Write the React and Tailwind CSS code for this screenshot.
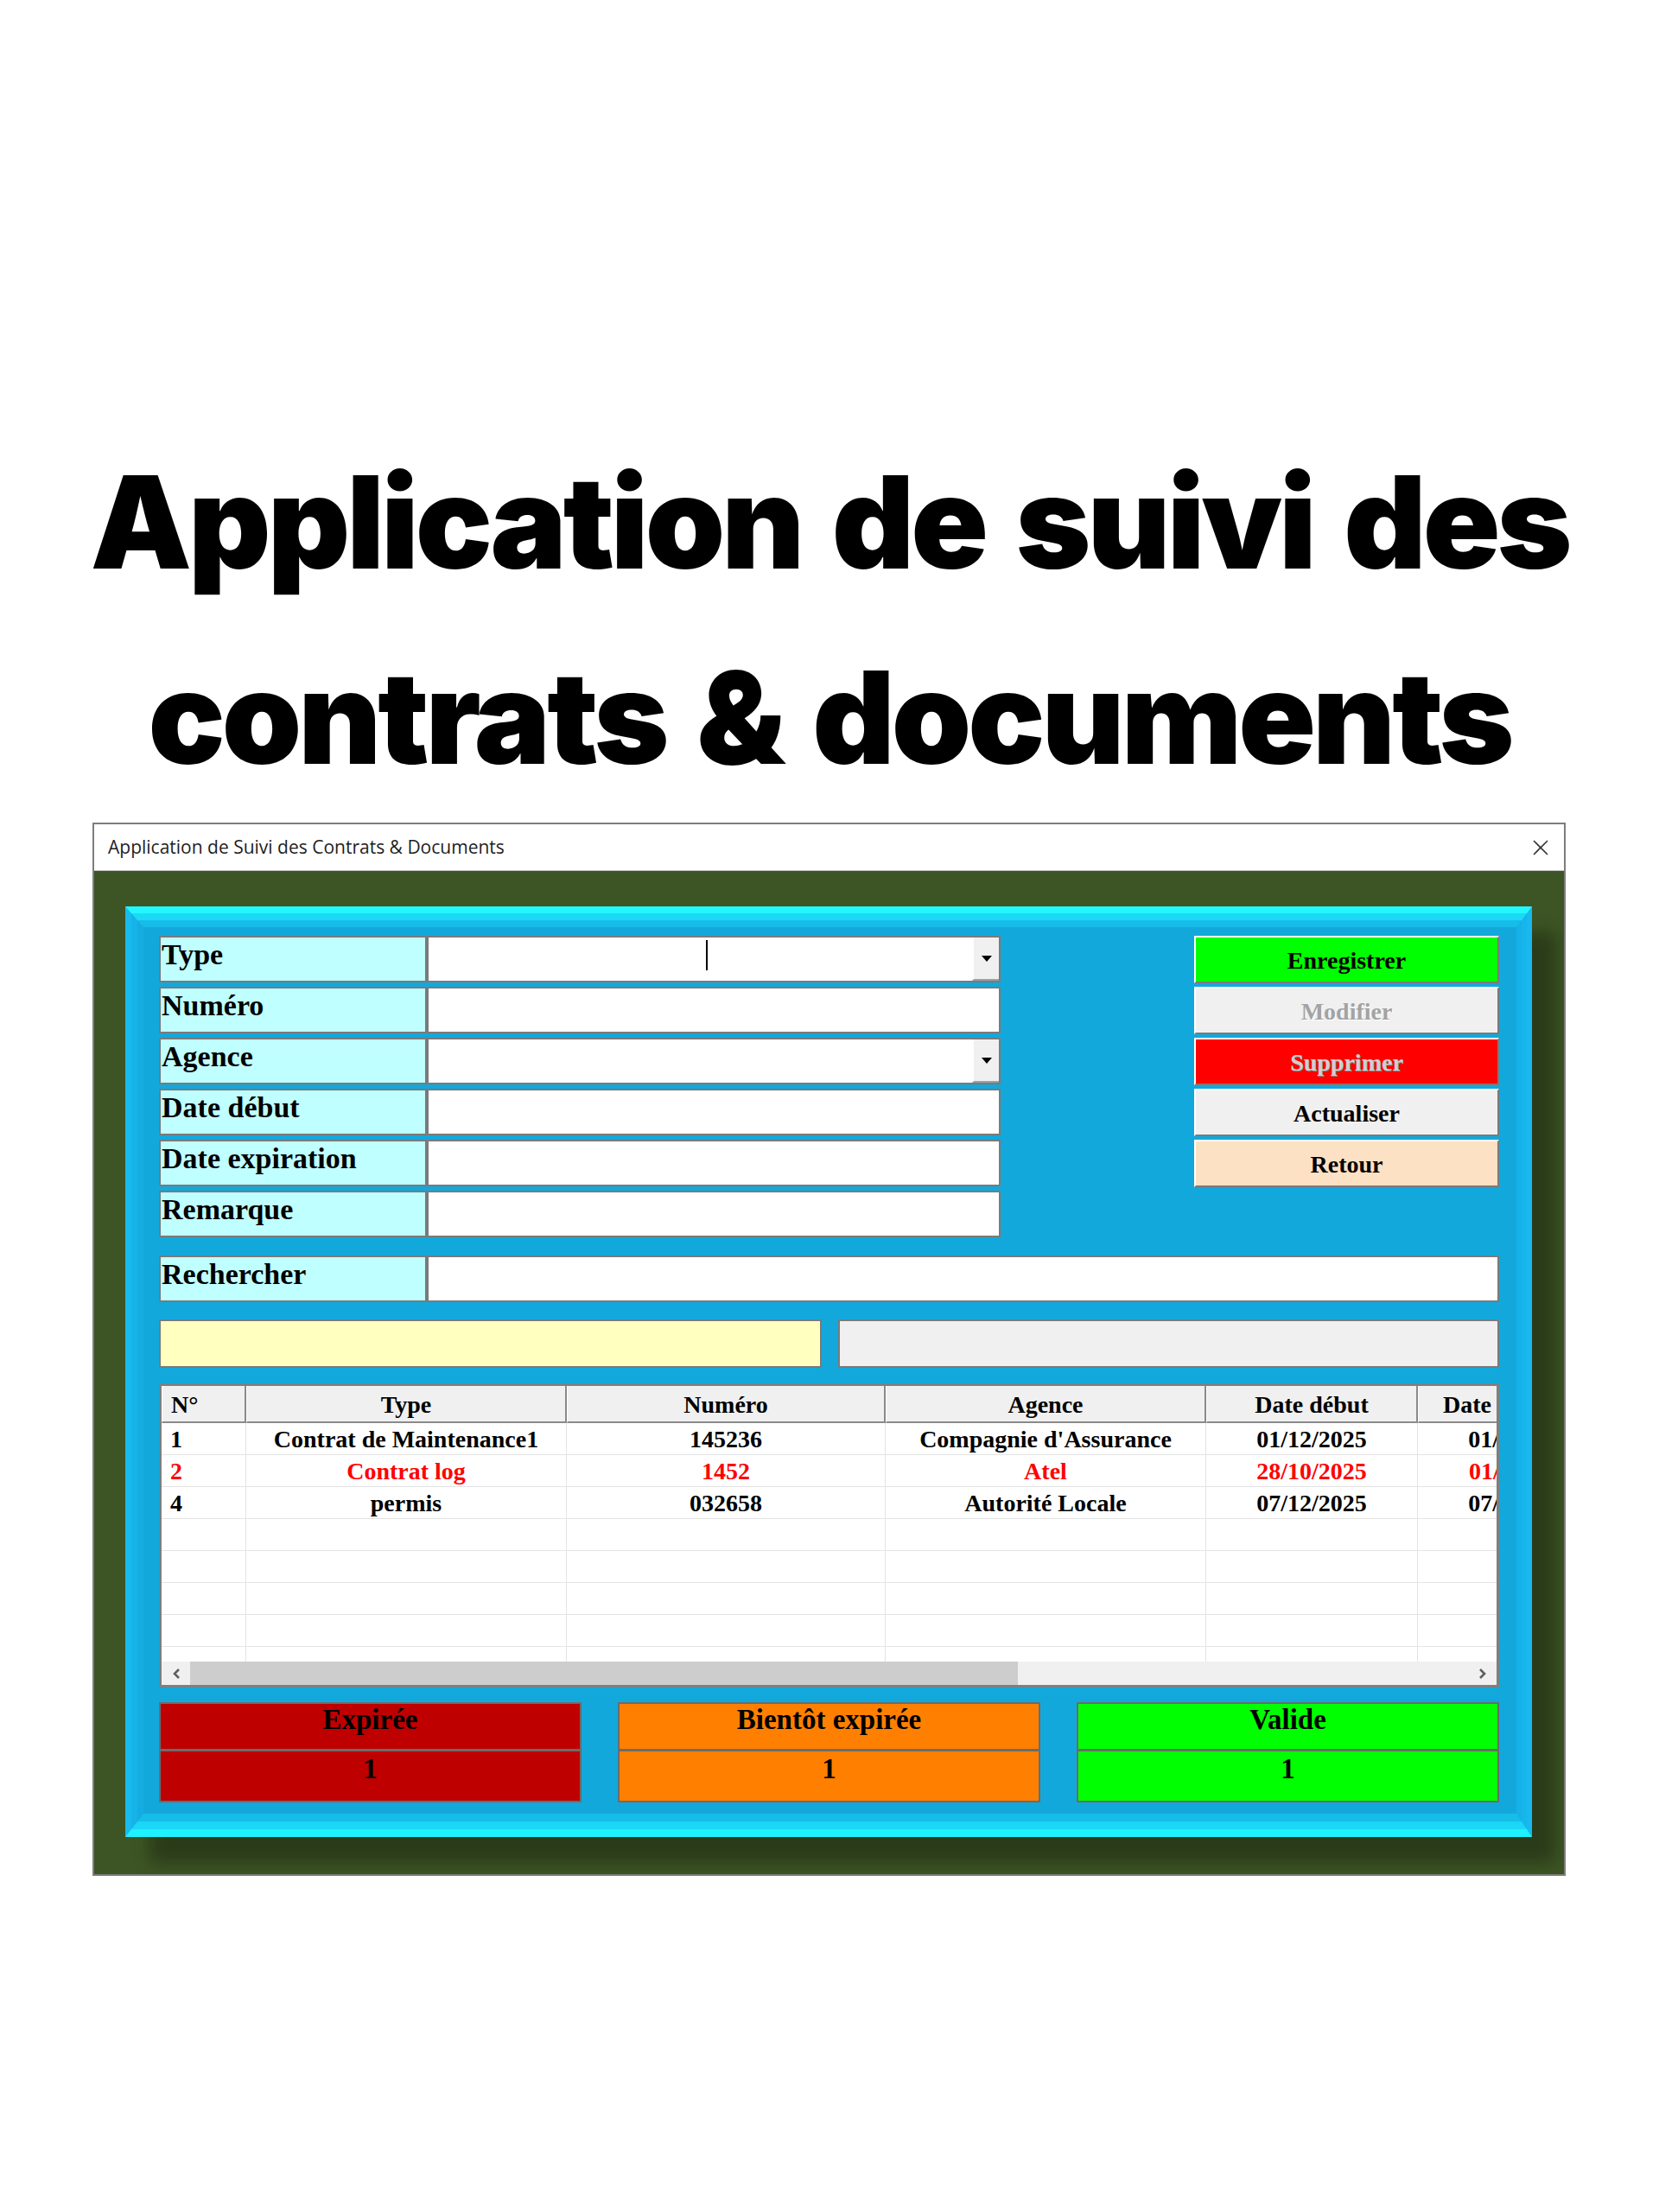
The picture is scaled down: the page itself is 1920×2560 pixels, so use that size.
import React from 'react';

const serif = { fontFamily: '"Liberation Serif", "Times New Roman", serif' };

const fields = [
  { label: 'Type', combo: true, cursor: true },
  { label: 'Numéro' },
  { label: 'Agence', combo: true },
  { label: 'Date début' },
  { label: 'Date expiration' },
  { label: 'Remarque' },
];

const buttons = [
  { label: 'Enregistrer', cls: 'bg-[#00ff00] text-black' },
  { label: 'Modifier', cls: 'bg-[#f0f0f0] text-[#a3a3a3] [text-shadow:1px_1px_0_#ffffff]' },
  { label: 'Supprimer', cls: 'bg-[#ff0000] text-[#cfcfcf] [text-shadow:1px_1px_0_#8a8a8a]' },
  { label: 'Actualiser', cls: 'bg-[#f0f0f0] text-black' },
  { label: 'Retour', cls: 'bg-[#fde1c4] text-black' },
];

const rows = [
  { red: false, cells: ['1', 'Contrat de Maintenance1', '145236', "Compagnie d'Assurance", '01/12/2025', '01/12/2026'] },
  { red: true, cells: ['2', 'Contrat log', '1452', 'Atel', '28/10/2025', '01/11/2025'] },
  { red: false, cells: ['4', 'permis', '032658', 'Autorité Locale', '07/12/2025', '07/12/2026'] },
];

const headers = ['N°', 'Type', 'Numéro', 'Agence', 'Date début', 'Date expiration'];
const cols = 'grid grid-cols-[98px_371px_369px_371px_245px_245px]';

const ComboArrow = () => (
  <div className="w-[31px] h-full bg-[#f0f0f0] border-l-2 border-l-[#ffffff] border-b-2 border-b-[#a0a0a0] flex items-center justify-center">
    <svg width="12" height="7" viewBox="0 0 12 7">
      <polygon points="0,0 12,0 6,7" fill="#000" />
    </svg>
  </div>
);

const Chevron = ({ dir }) => (
  <svg width="10" height="14" viewBox="0 0 10 14">
    <polyline
      points={dir === 'left' ? '8,2 3,7 8,12' : '2,2 7,7 2,12'}
      fill="none"
      stroke="#5f5f5f"
      strokeWidth="2.6"
    />
  </svg>
);

const FormRow = ({ label, combo, cursor, wide }) => (
  <div className="flex h-[54px]">
    <div className="w-[310px] h-full bg-[#c0ffff] border-2 border-[#7a7a7a] pl-[1px] text-[34px] font-bold leading-[1.15] text-black" style={serif}>
      {label}
    </div>
    <div className={`${wide ? 'flex-1' : 'w-[664px]'} h-full bg-white border-2 border-[#7a7a7a] flex justify-end relative`}>
      {cursor && <div className="absolute left-[321px] top-[3px] w-[2px] h-[35px] bg-black" />}
      {combo && <ComboArrow />}
    </div>
  </div>
);

const StatusBox = ({ title, value, color }) => (
  <div className={`w-[491px] h-[116px] flex flex-col border-2 border-[#6b6b6b] ${color}`} style={serif}>
    <div className="h-[55px] border-b-[3px] border-[#6b6b6b] text-center text-[33px] font-bold leading-[1.15] text-black">{title}</div>
    <div className="flex-1 pt-[2px] text-center text-[33px] font-bold leading-[1.15] text-black">{value}</div>
  </div>
);

export default function App() {
  return (
    <div className="w-[1920px] h-[2560px] bg-white overflow-hidden">
      <div className="h-[952px] pt-[492px] text-center text-black font-black text-[148px] leading-[226px] tracking-[-4px] [word-spacing:10px]" style={{ fontFamily: 'Inter, "Liberation Sans", sans-serif' }}>
        <div>Application de suivi des</div>
        <div>contrats &amp; documents</div>
      </div>

      <div className="ml-[107px] w-[1705px] h-[1219px] border-2 border-[#7d7d7d] flex flex-col">
        <div className="h-[54px] bg-white flex items-center justify-between pl-[16px] pr-[17px] border-b border-[#c8c8c8]">
          <span className="text-[21px] text-[#1e1e1e]" style={{ fontFamily: '"Open Sans", "Noto Sans", sans-serif' }}>
            Application de Suivi des Contrats &amp; Documents
          </span>
          <svg width="20" height="20" viewBox="0 0 20 20">
            <line x1="2" y1="2" x2="18" y2="18" stroke="#333" strokeWidth="1.6" />
            <line x1="18" y1="2" x2="2" y2="18" stroke="#333" strokeWidth="1.6" />
          </svg>
        </div>

        <div className="flex-1 bg-[#3d5524] overflow-hidden pt-[41px] pl-[36px]">
          <div className="w-[1628px] h-[1077px] border-t-[8px] border-l-[7px] border-r-[6px] border-b-[9px] border-t-[#22f7ff] border-l-[#19bbee] border-r-[#17b9ef] border-b-[#1ff1ff] shadow-[28px_30px_18px_rgba(0,0,0,0.3)]">
            <div className="h-full border-t-[8px] border-l-[7px] border-r-[6px] border-b-[9px] border-t-[#1cd9f6] border-l-[#16b3e8] border-r-[#16b5ec] border-b-[#1bd6f5]">
              <div className="h-full border-t-[8px] border-l-[7px] border-r-[6px] border-b-[9px] border-t-[#17bce9] border-l-[#14ace1] border-r-[#15b1e8] border-b-[#17bde9] bg-[#13a8dc] pl-[18px] pt-[10px]">
                <div className="w-[1551px] flex flex-col">
                  <div className="flex">
                    <div className="w-[974px] flex flex-col gap-[5px]">
                      {fields.map((f) => (
                        <FormRow key={f.label} {...f} />
                      ))}
                    </div>
                    <div className="ml-[224px] w-[353px] flex flex-col gap-[4px]">
                      {buttons.map((b) => (
                        <div
                          key={b.label}
                          className={`h-[55px] flex items-center justify-center pt-[2px] border-2 border-t-[#ffffff] border-l-[#ffffff] border-r-[#7a7a7a] border-b-[#7a7a7a] text-[28px] font-bold leading-none ${b.cls}`}
                          style={serif}
                        >
                          {b.label}
                        </div>
                      ))}
                    </div>
                  </div>

                  <div className="mt-[21px]">
                    <FormRow label="Rechercher" wide />
                  </div>

                  <div className="mt-[20px] flex gap-[19px] h-[56px]">
                    <div className="w-[767px] bg-[#ffffc0] border-2 border-[#7a7a7a]" />
                    <div className="flex-1 bg-[#f0f0f0] border-2 border-[#7a7a7a]" />
                  </div>

                  <div className="mt-[18px] h-[352px] border-[3px] border-[#7f7f7f] bg-white flex flex-col" style={serif}>
                    <div className="flex-1 overflow-hidden">
                      <div className={`${cols} h-[43px] w-max`}>
                        {headers.map((h, i) => (
                          <div
                            key={h}
                            className={`bg-[#f0f0f0] border-r-2 border-b-2 border-[#8a8a8a] border-l border-l-white pt-[3px] text-[28px] font-bold leading-[38px] text-black whitespace-nowrap overflow-hidden ${i === 0 ? 'text-left pl-[10px]' : 'text-center'}`}
                          >
                            {h}
                          </div>
                        ))}
                      </div>
                      {rows.map((r, ri) => (
                        <div key={ri} className={`${cols} h-[37px] w-max`}>
                          {r.cells.map((c, ci) => (
                            <div
                              key={ci}
                              className={`border-r border-b border-[#e4e4e4] pt-[2px] text-[28px] font-bold leading-[34px] whitespace-nowrap overflow-hidden ${r.red ? 'text-[#ff0000]' : 'text-black'} ${ci === 0 ? 'text-left pl-[10px]' : 'text-center'}`}
                            >
                              {c}
                            </div>
                          ))}
                        </div>
                      ))}
                      {[0, 1, 2, 3, 4].map((e) => (
                        <div key={e} className={`${cols} h-[37px] w-max`}>
                          {headers.map((h) => (
                            <div key={h} className="border-r border-b border-[#e4e4e4]" />
                          ))}
                        </div>
                      ))}
                    </div>
                    <div className="h-[27px] bg-[#f0f0f0] flex items-stretch">
                      <div className="w-[33px] flex items-center justify-center">
                        <Chevron dir="left" />
                      </div>
                      <div className="w-[958px] bg-[#cdcdcd]" />
                      <div className="flex-1" />
                      <div className="w-[33px] flex items-center justify-center">
                        <Chevron dir="right" />
                      </div>
                    </div>
                  </div>

                  <div className="mt-[17px] flex gap-[42px]">
                    <StatusBox title="Expirée" value="1" color="bg-[#bf0000]" />
                    <StatusBox title="Bientôt expirée" value="1" color="bg-[#ff8000]" />
                    <StatusBox title="Valide" value="1" color="bg-[#00ff00]" />
                  </div>
                </div>
              </div>
            </div>
          </div>
        </div>
      </div>
    </div>
  );
}
